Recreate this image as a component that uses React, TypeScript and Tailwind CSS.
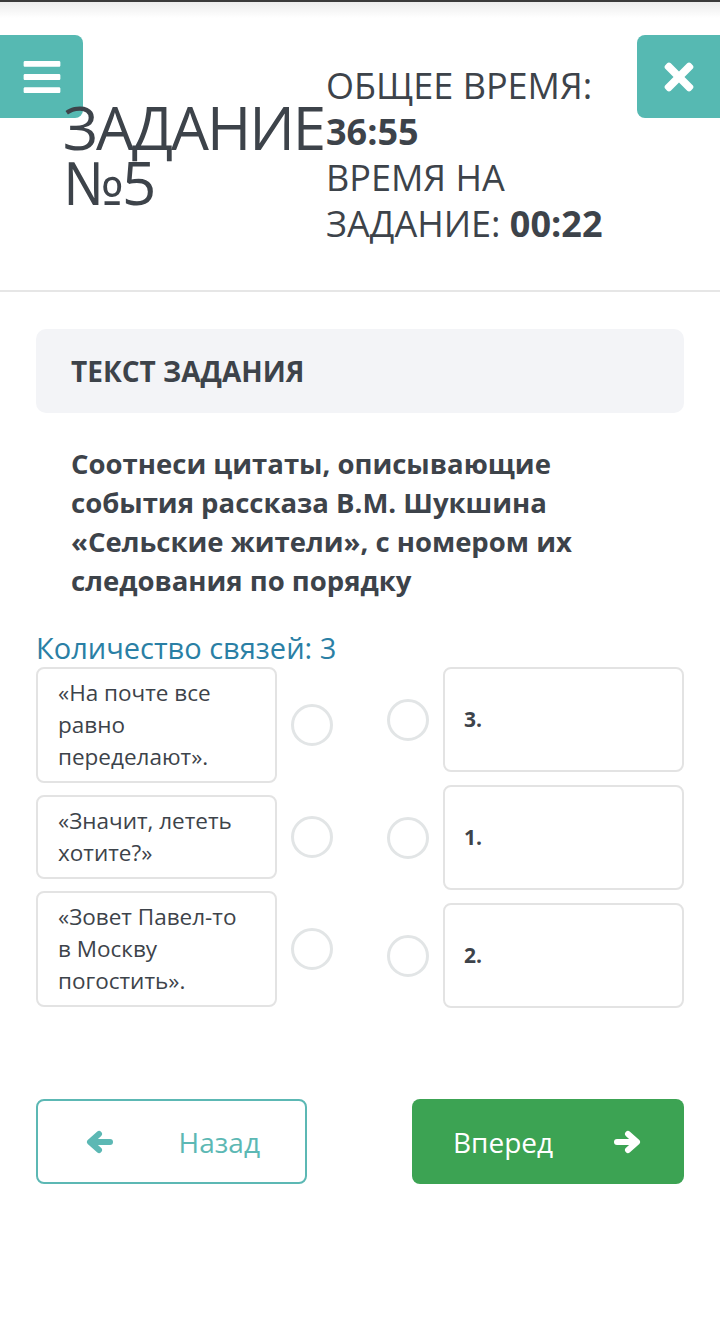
import React from "react";
import { FaBars, FaTimes } from "react-icons/fa";

const quotes = [
  "«На почте все равно переделают».",
  "«Значит, лететь хотите?»",
  "«Зовет Павел-то в Москву погостить».",
];

const answers = ["3.", "1.", "2."];

const Circle = () => (
  <div className="w-[42px] h-[42px] rounded-full border-[3px] border-[#e2e5e6] bg-white shrink-0" />
);

// chunky arrow like the one on the buttons
const Arrow = ({ dir }: { dir: "left" | "right" }) => (
  <svg
    width="28"
    height="24"
    viewBox="0 0 28 24"
    fill="none"
    stroke="currentColor"
    strokeWidth="6"
    strokeLinecap="round"
    strokeLinejoin="round"
    style={{ transform: dir === "right" ? "scaleX(-1)" : undefined }}
  >
    <path d="M13 4 L4 12 L13 20" />
    <path d="M5 12 H24" />
  </svg>
);

const App = () => {
  return (
    <div
      className="w-[720px] min-h-[1328px] bg-white text-[#3d434a]"
      style={{ fontFamily: '"Open Sans", "Noto Sans", sans-serif' }}
    >
      {/* header */}
      <div className="relative h-[292px] border-b-2 border-[#e6e6e6]">
        <div className="h-[2px] bg-[#3a3a3a]" />
        <div className="h-[16px] bg-gradient-to-b from-[#ececec] to-white" />
        <button className="absolute left-0 top-[35px] w-[83px] h-[83px] bg-[#56b9b2] rounded-r-[8px] flex items-center justify-center text-white">
          <FaBars size={42} />
        </button>
        <button className="absolute right-0 top-[35px] w-[83px] h-[83px] bg-[#56b9b2] rounded-l-[8px] flex items-center justify-center text-white">
          <FaTimes size={42} />
        </button>
        <div className="absolute inset-x-0 top-[18px] bottom-0 pt-[2px] flex items-center">
          <div className="w-[263px] ml-[63px] text-[60px] leading-[55px] tracking-[-2px] shrink-0">
            ЗАДАНИЕ №5
          </div>
          <div className="text-[36px] leading-[46px]">
            <div>ОБЩЕЕ ВРЕМЯ:</div>
            <div className="font-bold">36:55</div>
            <div>ВРЕМЯ НА</div>
            <div>
              ЗАДАНИЕ: <span className="font-bold">00:22</span>
            </div>
          </div>
        </div>
      </div>

      <div className="px-[36px]">
        <div className="mt-[37px] h-[84px] bg-[#f3f4f7] rounded-[10px] flex items-center px-[35px]">
          <span className="text-[28px] font-bold">ТЕКСТ ЗАДАНИЯ</span>
        </div>

        <p className="mt-[31px] px-[35px] text-[27.5px] leading-[39px] font-bold">
          Соотнеси цитаты, описывающие события рассказа В.М. Шукшина «Сельские
          жители», с номером их следования по порядку
        </p>

        <div className="mt-[31px] text-[29px] leading-[34px] text-[#2a7fa5]">
          Количество связей: 3
        </div>

        <div className="mt-[2px] flex">
          <div className="w-[324px] flex flex-col gap-[12px]">
            {quotes.map((q, i) => (
              <div key={i} className="flex items-center">
                <div className="w-[241px] border-2 border-[#e3e3e3] rounded-[8px] pl-[20px] pr-[28px] py-[8px] text-[22.5px] leading-[32px]">
                  {q}
                </div>
                <div className="ml-[14px]">
                  <Circle />
                </div>
              </div>
            ))}
          </div>
          <div className="w-[324px] flex flex-col gap-[13px]">
            {answers.map((a, i) => (
              <div key={i} className="flex items-center">
                <div className="ml-[27px]">
                  <Circle />
                </div>
                <div className="ml-[14px] w-[241px] h-[105px] border-2 border-[#e3e3e3] rounded-[8px] px-[19px] flex items-center text-[21px] font-bold">
                  {a}
                </div>
              </div>
            ))}
          </div>
        </div>

        <div className="mt-[91px] flex justify-between">
          <button className="w-[271px] h-[85px] border-2 border-[#5cb8b4] rounded-[8px] bg-white flex items-center justify-between pl-[48px] pr-[45px] text-[#5cb8b4] text-[28px]">
            <Arrow dir="left" />
            <span>Назад</span>
          </button>
          <button className="w-[272px] h-[85px] rounded-[8px] bg-[#3ca353] flex items-center justify-between pl-[41px] pr-[43px] text-white text-[28px]">
            <span>Вперед</span>
            <Arrow dir="right" />
          </button>
        </div>
      </div>
    </div>
  );
};

export default App;
